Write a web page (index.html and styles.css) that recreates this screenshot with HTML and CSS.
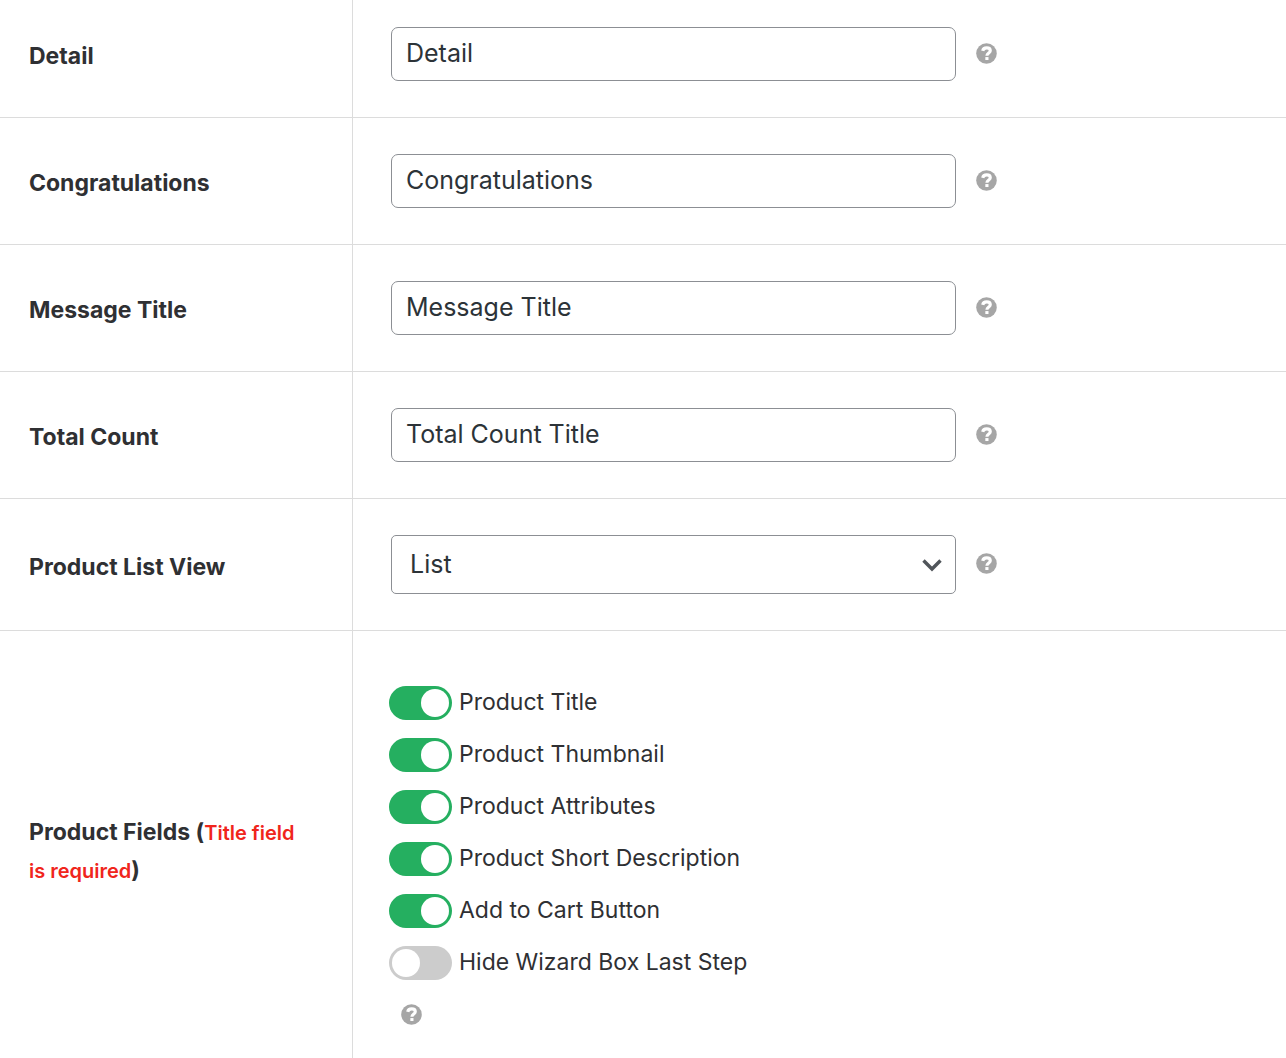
FILE: index.html
```html
<!DOCTYPE html>
<html lang="en">
<head>
<meta charset="utf-8">
<meta name="viewport" content="width=device-width, initial-scale=1">
<title>Wizard settings</title>
<link rel="stylesheet" href="styles.css">
</head>
<body>
<svg class="sprite" aria-hidden="true">
  <symbol id="help" viewBox="0 0 20 20">
    <circle cx="10" cy="10" r="9.8" fill="currentColor"/>
    <path d="M6.4 7.5C6.8 5.4 8.2 4.7 10.2 4.7C12.3 4.7 13.6 5.6 13.6 7.3C13.6 9.5 10.4 9.5 10.4 12.2" fill="none" stroke="#fff" stroke-width="3"/>
    <rect x="8.9" y="13.4" width="3" height="2.8" fill="#fff"/>
  </symbol>
</svg>
<form class="settings">
  <div class="row">
    <div class="name"><label for="detail">Detail</label></div>
    <div class="field"><input class="control" id="detail" type="text" value="Detail"><button class="help" type="button" aria-label="Help"><svg class="icon"><use href="#help"/></svg></button></div>
  </div>
  <div class="row">
    <div class="name"><label for="congrats">Congratulations</label></div>
    <div class="field"><input class="control" id="congrats" type="text" value="Congratulations"><button class="help" type="button" aria-label="Help"><svg class="icon"><use href="#help"/></svg></button></div>
  </div>
  <div class="row">
    <div class="name"><label for="message">Message Title</label></div>
    <div class="field"><input class="control" id="message" type="text" value="Message Title"><button class="help" type="button" aria-label="Help"><svg class="icon"><use href="#help"/></svg></button></div>
  </div>
  <div class="row">
    <div class="name"><label for="total">Total Count</label></div>
    <div class="field"><input class="control" id="total" type="text" value="Total Count Title"><button class="help" type="button" aria-label="Help"><svg class="icon"><use href="#help"/></svg></button></div>
  </div>
  <div class="row">
    <div class="name"><label for="view">Product List View</label></div>
    <div class="field">
      <div class="select">
        <select class="control" id="view"><option>List</option></select>
        <svg class="chevron" viewBox="0 0 20 14" aria-hidden="true"><path d="M1.5 2.5L10 11L18.5 2.5" fill="none" stroke="currentColor" stroke-width="3.4"/></svg>
      </div>
      <button class="help" type="button" aria-label="Help"><svg class="icon"><use href="#help"/></svg></button>
    </div>
  </div>
  <div class="row" role="group" aria-labelledby="fields">
    <div class="name"><div id="fields">Product Fields (<span class="required">Title field is required</span>)</div></div>
    <div class="field toggles">
      <label class="toggle"><input class="switch" type="checkbox" checked>Product Title</label>
      <label class="toggle"><input class="switch" type="checkbox" checked>Product Thumbnail</label>
      <label class="toggle"><input class="switch" type="checkbox" checked>Product Attributes</label>
      <label class="toggle"><input class="switch" type="checkbox" checked>Product Short Description</label>
      <label class="toggle"><input class="switch" type="checkbox" checked>Add to Cart Button</label>
      <label class="toggle"><input class="switch" type="checkbox">Hide Wizard Box Last Step</label>
      <button class="help" type="button" aria-label="Help"><svg class="icon"><use href="#help"/></svg></button>
    </div>
  </div>
</form>
</body>
</html>
```
FILE: styles.css
```css
* {
  box-sizing: border-box;
}

body {
  margin: 0;
  background: #fff;
  color: #2f3033;
  font-family: Inter, "Liberation Sans", sans-serif;
  font-size: 23px;
}

.sprite {
  display: none;
}

.row {
  display: grid;
  grid-template-columns: 353px 1fr;
  border-bottom: 1px solid #dcdcdc;
}

.row:last-child {
  border-bottom: 0;
}

.name {
  display: flex;
  align-items: center;
  padding: 4px 48px 0 29px;
  border-right: 1px solid #dcdcdc;
  font-size: 23px;
  font-weight: 700;
  line-height: 38px;
}

.row:first-child .name {
  padding-top: 0;
  padding-bottom: 6px;
}

.required {
  color: #f0251c;
  font-size: 20px;
  font-weight: 600;
  line-height: 24px;
}

.field {
  display: flex;
  align-items: center;
  gap: 20px;
  padding: 36px 38px;
}

.row:first-child .field {
  padding-top: 27px;
}

.control {
  width: 565px;
  height: 54px;
  padding: 0 14px 2px;
  border: 1px solid #8c8f94;
  border-radius: 7px;
  background: #fff;
  color: #2c3338;
  font-family: inherit;
  font-size: 25px;
}

.select {
  display: grid;
  align-items: center;
}

.select > * {
  grid-area: 1 / 1;
}

select.control {
  height: 59px;
  padding: 0 18px 2px;
  border-radius: 5px;
  appearance: none;
}

.chevron {
  justify-self: end;
  width: 20px;
  height: 14px;
  margin-right: 14px;
  color: #50555a;
  pointer-events: none;
}

.help {
  display: flex;
  padding: 0 0 2px;
  border: 0;
  background: none;
  color: #a6a6a6;
}

.icon {
  width: 21px;
  height: 21px;
}

.toggles {
  flex-direction: column;
  align-items: flex-start;
  gap: 0;
  padding: 45px 36px 40px;
}

.toggle {
  display: flex;
  align-items: center;
  gap: 7px;
  height: 52px;
}

.switch {
  display: flex;
  align-items: center;
  width: 63px;
  height: 34px;
  margin: 2px 0 0;
  padding: 0 3px;
  border-radius: 17px;
  background: #ccc;
  appearance: none;
}

.switch::before {
  content: "";
  width: 28px;
  height: 28px;
  border-radius: 50%;
  background: #fff;
}

.switch:checked {
  justify-content: flex-end;
  background: #25af60;
}

.toggles .help {
  margin: 16px 12px 0;
}
```
